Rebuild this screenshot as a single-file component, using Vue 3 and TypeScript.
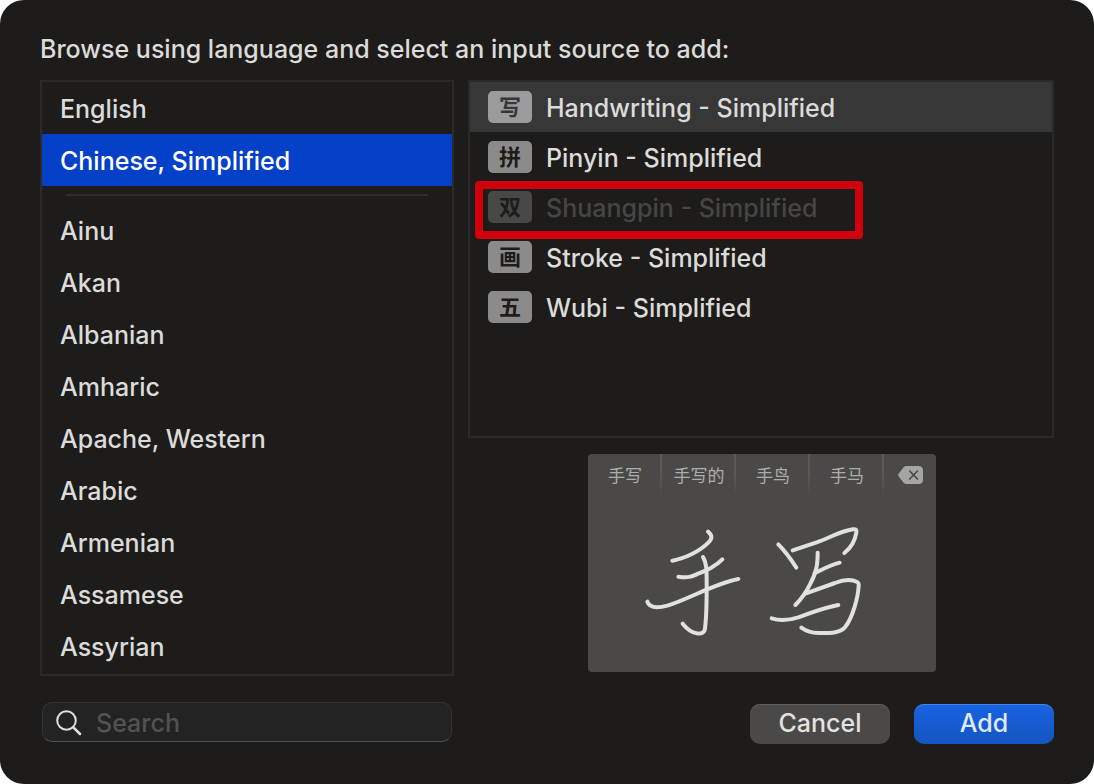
<script setup lang="ts">
import { ref } from 'vue'

interface Source {
  glyph: string
  name: string
  disabled?: boolean
}

const pinned: string[] = ['English', 'Chinese, Simplified']
const languages: string[] = [
  'Ainu',
  'Akan',
  'Albanian',
  'Amharic',
  'Apache, Western',
  'Arabic',
  'Armenian',
  'Assamese',
  'Assyrian',
]
const sources: Source[] = [
  { glyph: '写', name: 'Handwriting - Simplified' },
  { glyph: '拼', name: 'Pinyin - Simplified' },
  { glyph: '双', name: 'Shuangpin - Simplified', disabled: true },
  { glyph: '画', name: 'Stroke - Simplified' },
  { glyph: '五', name: 'Wubi - Simplified' },
]
const candidates: string[] = ['手写', '手写的', '手鸟', '手马']

const language = ref('Chinese, Simplified')
const source = ref('Handwriting - Simplified')
const query = ref('')
</script>

<template>
  <main class="dialog">
    <h1 class="title">Browse using language and select an input source to add:</h1>

    <div class="columns">
      <nav class="panel" aria-label="Languages">
        <ul class="list">
          <li v-for="name in pinned" :key="name">
            <button
              type="button"
              class="language"
              :class="{ selected: name === language }"
              @click="language = name"
            >{{ name }}</button>
          </li>
        </ul>
        <hr class="separator" />
        <ul class="list">
          <li v-for="name in languages" :key="name">
            <button
              type="button"
              class="language"
              :class="{ selected: name === language }"
              @click="language = name"
            >{{ name }}</button>
          </li>
        </ul>
      </nav>

      <section class="side" aria-label="Input sources">
        <ul class="panel list sources">
          <li v-for="item in sources" :key="item.name" class="source-row">
            <button
              type="button"
              class="source"
              :class="{ current: item.name === source }"
              :disabled="item.disabled"
              @click="source = item.name"
            >
              <span class="badge">{{ item.glyph }}</span>
              <span class="source-name">{{ item.name }}</span>
            </button>
            <span v-if="item.disabled" class="highlight"></span>
          </li>
        </ul>

        <div class="preview">
          <div class="candidates">
            <span v-for="word in candidates" :key="word" class="candidate">{{ word }}</span>
            <span class="erase">
              <svg width="25" height="18" viewBox="0 0 25 18" aria-hidden="true">
                <path
                  d="M8.5 0H20.5Q25 0 25 4.5V13.5Q25 18 20.5 18H8.5Q6.8 18 5.6 16.8L.7 10.4Q-.5 9 .7 7.6L5.6 1.2Q6.8 0 8.5 0Z"
                  fill="#a5a5a4"
                />
                <path d="M11.7 5L19.5 13M19.5 5L11.7 13" stroke="#4a4947" stroke-width="1.6" stroke-linecap="round" />
              </svg>
            </span>
          </div>
          <svg class="ink" viewBox="24 168 1044 510" aria-hidden="true">
            <path d="M384 257C398 268 397 278 385 290C360 315 315 338 277 344" />
            <path d="M295 392C325 396 335 392 350 385C385 370 405 362 427 340" />
            <path d="M202 467C208 487 235 486 262 479C330 458 400 414 475 399" />
            <path d="M369 333C381 352 380 380 380 420C380 470 380 510 375 547C373 572 335 567 308 533" />
            <path d="M595 295C615 315 630 335 649 365" />
            <path d="M638 313L710 289C750 275 780 256 819 250C832 249 829 254 829 260C825 285 810 308 793 321" />
            <path d="M713 320C713 355 710 378 690 415C680 435 665 458 646 477" />
            <path d="M704 382C730 369 750 357 779 350" />
            <path d="M676 443L765 411C790 401 815 400 832 408C836 411 837 414 836 420C834 455 818 515 795 544C780 562 750 562 715 561C690 561 675 553 664 545" />
            <path d="M575 517C600 525 630 522 655 514C700 498 730 485 775 477" />
          </svg>
        </div>
      </section>
    </div>

    <footer class="footer">
      <label class="search">
        <svg width="26" height="26" viewBox="0 0 26 26" fill="none" stroke="#dededd" aria-hidden="true">
          <circle cx="10.5" cy="10.5" r="9.3" stroke-width="2" />
          <path d="M17.3 17.3L24 24" stroke-width="2.6" stroke-linecap="round" />
        </svg>
        <input v-model="query" type="search" placeholder="Search" aria-label="Search" />
      </label>
      <div class="actions">
        <button type="button" class="action">Cancel</button>
        <button type="button" class="action primary">Add</button>
      </div>
    </footer>
  </main>
</template>

<style>
body {
  margin: 0;
  background: #fff;
}
</style>

<style scoped>
.dialog {
  box-sizing: border-box;
  min-height: 100vh;
  padding: 33px 40px 40px;
  border-radius: 24px;
  background: #1d1c1a;
  color: #dbdbda;
  font-family: Inter, "Noto Sans CJK SC", sans-serif;
  font-size: 25px;
  font-weight: 500;
  line-height: 32px;
}

button,
input {
  box-sizing: border-box;
  margin: 0;
  padding: 0;
  border: 0;
  background: none;
  color: inherit;
  font: inherit;
}

.title {
  margin: 0 0 15px;
  font-size: 25px;
  font-weight: 500;
  line-height: 32px;
}

.columns,
.footer {
  display: grid;
  grid-template-columns: minmax(0, 414fr) minmax(0, 586fr);
  gap: 14px;
}

.panel {
  box-sizing: border-box;
  border: 2px solid #2a2a29;
}

.list {
  margin: 0;
  padding: 0;
  list-style: none;
}

.language {
  display: block;
  width: 100%;
  height: 52px;
  padding: 2px 18px 0;
  text-align: left;
}

.language.selected {
  background: #0540c8;
  color: #fff;
}

.separator {
  height: 2px;
  margin: 8px 24px;
  border: 0;
  background: #2e2e2d;
}

nav.panel {
  padding-bottom: 2px;
}

.side {
  display: flex;
  flex-direction: column;
  gap: 16px;
}

.sources {
  min-height: 358px;
}

.source-row {
  position: relative;
}

.source {
  display: flex;
  align-items: center;
  gap: 14px;
  width: 100%;
  height: 50px;
  padding: 0 18px;
  text-align: left;
}

.source-name {
  padding-top: 2px;
}

.badge {
  width: 44px;
  height: 32px;
  border-radius: 5px;
  background: #8c8b8b;
  color: #1d1c1a;
  font-size: 22px;
  font-weight: 700;
  line-height: 32px;
  text-align: center;
}

.current {
  background: #373737;
}

.current .badge {
  background: #9b9b9b;
  color: #373737;
}

.source:disabled {
  color: #464644;
}

.source:disabled .badge {
  background: #484846;
}

.highlight {
  position: absolute;
  top: -1px;
  left: 5px;
  box-sizing: border-box;
  width: 388px;
  height: 58px;
  border: 8px solid #d0000c;
  border-radius: 4px;
  pointer-events: none;
}

.preview {
  align-self: center;
  width: 348px;
  margin-left: 2px;
  border-radius: 4px;
  background: #4a4947;
  overflow: hidden;
}

.candidates {
  display: grid;
  grid-template-columns: repeat(4, 74px) 1fr;
  height: 48px;
}

.candidate {
  padding-left: 2px;
  border-right: 2px solid;
  border-image: linear-gradient(#5a5a58, #5a5a58 40%, #4a4947 85%) 1;
  color: #adadac;
  font-size: 17px;
  font-weight: 400;
  line-height: 44px;
  text-align: center;
}

.erase {
  display: flex;
  justify-content: center;
  padding-top: 12px;
}

.ink {
  display: block;
  width: 100%;
  height: 170px;
  fill: none;
  stroke: #e1e1e0;
  stroke-width: 12;
  stroke-linecap: round;
  stroke-linejoin: round;
}

.footer {
  margin-top: 26px;
}

.search {
  box-sizing: border-box;
  display: flex;
  align-items: center;
  gap: 14px;
  height: 40px;
  margin: 0 2px;
  padding: 2px 13px 0;
  border: 1px solid #333332;
  border-bottom-color: #52524f;
  border-radius: 10px;
  background: #232323;
}

.search input {
  flex: 1;
  min-width: 0;
  outline: 0;
  appearance: none;
}

.search input::placeholder {
  color: #525250;
  opacity: 1;
}

.actions {
  display: flex;
  justify-content: flex-end;
  gap: 24px;
  padding-top: 2px;
}

.action {
  width: 140px;
  height: 40px;
  padding-bottom: 2px;
  border-radius: 10px;
  background: #4a4947;
  box-shadow: inset 0 1px #62615f;
  color: #e2e2e1;
}

.action.primary {
  background: linear-gradient(#1763e2, #1555c0);
  box-shadow: inset 0 1px #4483e8;
  color: #dfe9fb;
}
</style>
